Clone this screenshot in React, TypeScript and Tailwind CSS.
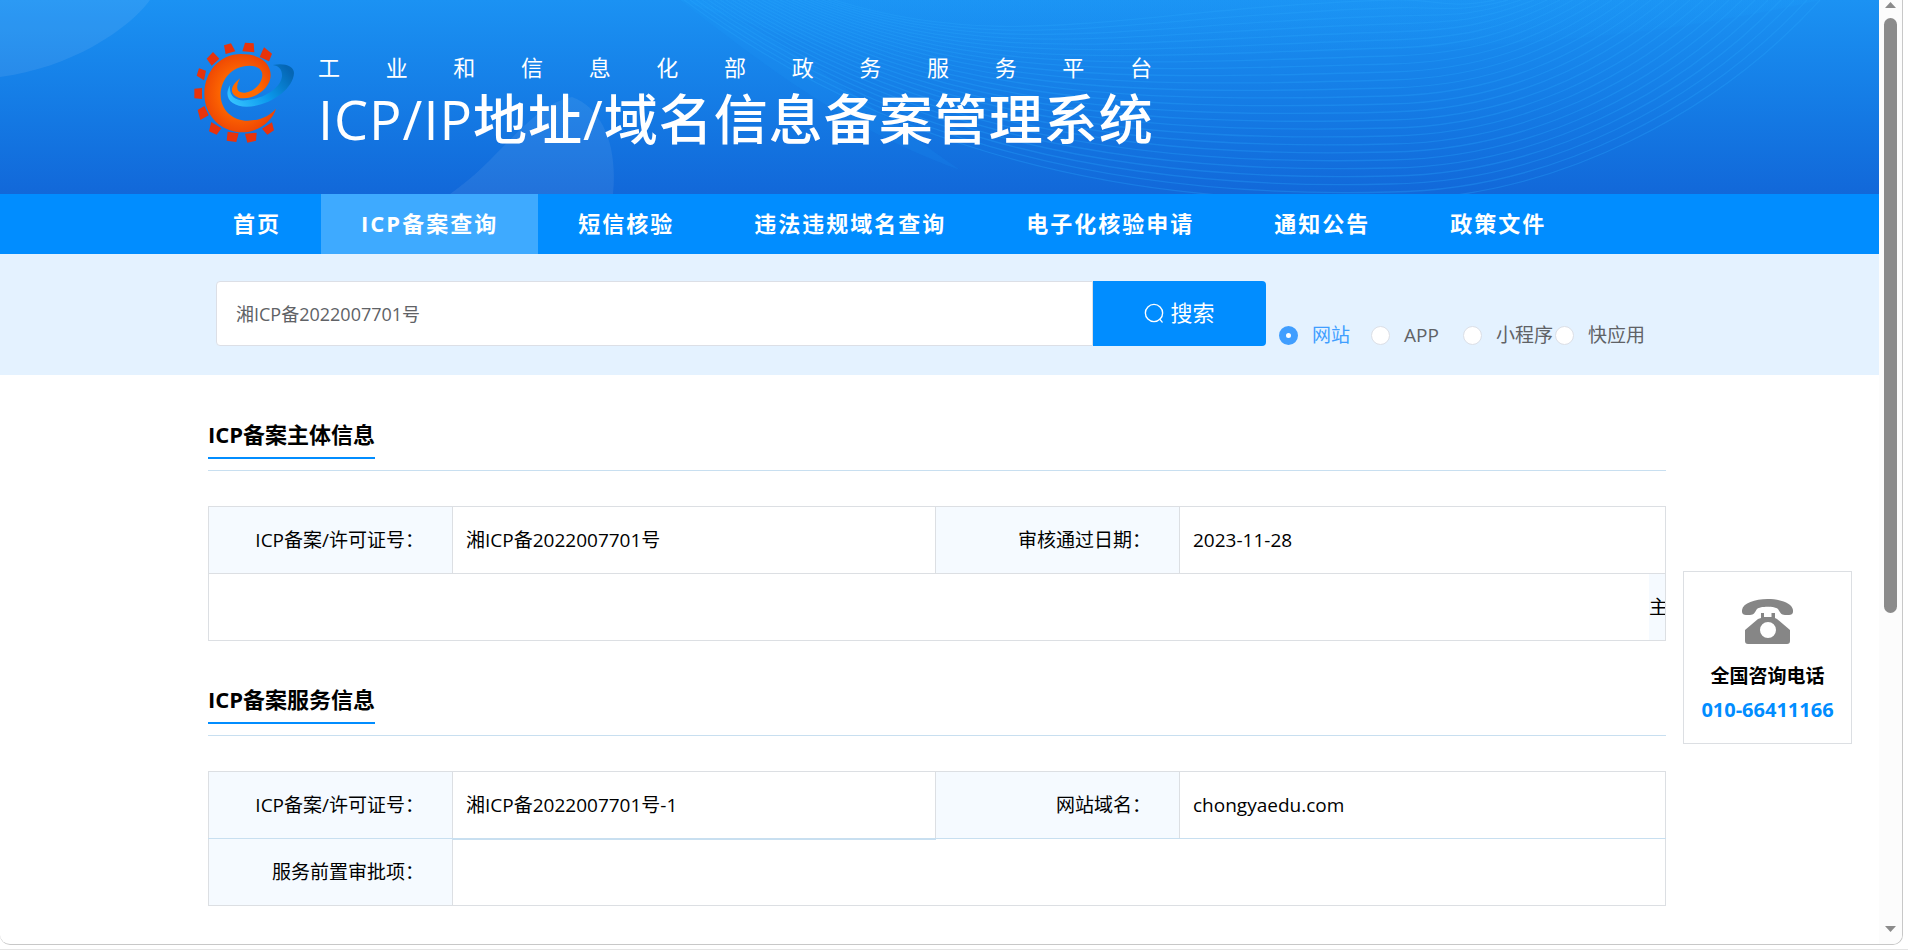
import { useState } from "react";

const navItems = ["首页", "ICP备案查询", "短信核验", "违法违规域名查询", "电子化核验申请", "通知公告", "政策文件"];
const kinds = ["网站", "APP", "小程序", "快应用"];
const waves = Array.from({ length: 26 }, (_, i) => i);

function Backdrop() {
  return (
    <svg
      className="absolute inset-0 h-full w-full"
      viewBox="0 0 1879 194"
      preserveAspectRatio="none"
      fill="none"
      aria-hidden="true"
    >
      <defs>
        <linearGradient id="sheet" x1="0" y1="0" x2="0" y2="1">
          <stop offset="0" stopColor="#1c9dfa" stopOpacity="0.7" />
          <stop offset="0.9" stopColor="#1c9dfa" stopOpacity="0" />
        </linearGradient>
      </defs>
      <path d="M0 0H150C128 30 70 68 0 77Z" fill="#fff" fillOpacity="0.08" />
      <path d="M450 194C500 160 530 105 572 97C602 108 618 145 613 194Z" fill="#fff" fillOpacity="0.07" />
      <path d="M680 0C850 60 960 80 1120 62C1320 45 1560 60 1820 0Z" fill="url(#sheet)" fillOpacity="0.35" />
      <path d="M680 0C770 70 850 130 960 170C860 100 800 50 700 0Z" fill="#1ea2fb" fillOpacity="0.12" />
      {waves.map((i) => (
        <path
          key={i}
          d={`M${684 + i * 6} 0C${860 + i * 6} ${130 - i * 3} ${1080 + i * 2} ${208 - i * 8} 1390 ${200 - i * 8}C${1560 - i * 5} ${198 - i * 8} ${1720 - i * 11} ${110 - i * 4} ${1820 - i * 13} 0`}
          stroke="#27a5fb"
          strokeOpacity="0.32"
          strokeWidth="1.3"
        />
      ))}
    </svg>
  );
}

function Logo() {
  return (
    <svg className="h-[101px] w-[100px] shrink-0" viewBox="27 22 300 303" aria-label="工业和信息化部" role="img">
      <defs>
        <radialGradient id="flame" cx="0.5" cy="0.5" r="0.6">
          <stop offset="0.4" stopColor="#ff6a00" />
          <stop offset="1" stopColor="#e93c05" />
        </radialGradient>
        <linearGradient id="ring" x1="0" y1="0.8" x2="1" y2="0.3">
          <stop offset="0" stopColor="#35c3ff" />
          <stop offset="0.5" stopColor="#0a98ec" />
          <stop offset="1" stopColor="#0566b4" />
        </linearGradient>
      </defs>
      <g fill="#e8330b">
        <path d="M117 32 138 26 151 50 122 58Z" />
        <path d="M180 24 206 26 208 53 172 50Z" />
        <path d="M237 38 261 57 252 80 224 67Z" />
        <path d="M84 52 103 72 80 93 65 72Z" />
        <path d="M42 101 63 108 57 137 35 123Z" />
        <path d="M28 162 51 160 51 193 28 191Z" />
        <path d="M38 226 58 214 71 242 46 256Z" />
        <path d="M79 262 109 281 95 300 72 290Z" />
        <path d="M128 291 161 296 154 322 125 318Z" />
        <path d="M180 297 215 294 213 318 187 324Z" />
        <path d="M231 282 261 263 267 287 247 300Z" />
      </g>
      <path
        fill="url(#ring)"
        d="M263 91C295 84 327 92 327 115C325 165 250 216 185 216C140 216 112 188 136 150C130 182 150 200 182 197C240 192 287 160 291 125C292 105 282 93 263 91Z"
      />
      <path
        fill="url(#flame)"
        d="M273 222C262 262 215 293 172 293C108 293 58 242 58 178C58 110 105 58 168 58C225 58 257 85 257 122C257 160 212 192 175 191C148 190 134 172 144 154C149 145 158 138 165 131C150 158 155 176 180 174C208 171 232 145 232 120C232 103 215 93 193 93C140 93 107 135 107 180C107 228 145 258 188 258C225 258 255 243 273 222Z"
      />
    </svg>
  );
}

function Header() {
  return (
    <header className="relative h-[194px] bg-linear-to-b from-[#1b92f3] to-[#1268d9] pl-[194px]">
      <Backdrop />
      <div className="relative flex pt-[42px] text-white">
        <Logo />
        <div className="ml-6 w-[834px]">
          <p className="h-[50px] pt-2 text-[22px] leading-[34px] [text-align-last:justify]">
            工 业 和 信 息 化 部 政 务 服 务 平 台
          </p>
          <h1 className="text-[54px] leading-[54px] font-medium tracking-[1px] whitespace-nowrap">
            ICP/IP地址/域名信息备案管理系统
          </h1>
        </div>
      </div>
    </header>
  );
}

function SearchBar() {
  const [kind, setKind] = useState("网站");
  const [query, setQuery] = useState("湘ICP备2022007701号");
  return (
    <form
      className="flex bg-[#e4f2ff] pt-[27px] pb-[29px] pl-[216px] text-[#606266]"
      onSubmit={(e) => e.preventDefault()}
    >
      <input
        type="text"
        aria-label="备案查询"
        value={query}
        onChange={(e) => setQuery(e.target.value)}
        className="h-[65px] w-[877px] rounded-l border border-[#dcdfe6] bg-white px-[19px] pb-0.5 text-lg outline-none"
      />
      <button
        type="submit"
        className="flex w-[173px] items-center justify-center gap-1.5 rounded-r bg-[#018dff] pb-0.5 text-[22px] text-white"
      >
        <svg className="size-5" viewBox="0 0 22 22" fill="none" stroke="currentColor" strokeWidth="1.5" aria-hidden="true">
          <circle cx="11" cy="11" r="9.500" />
          <path d="M17.500 18L20 21" strokeLinecap="round" />
        </svg>
        搜索
      </button>
      <fieldset className="ml-[13px] flex items-end">
        {kinds.map((k) => (
          <label
            key={k}
            className="flex h-[22px] w-[92px] items-center gap-[14px] text-[19px] whitespace-nowrap has-checked:text-[#409eff]"
          >
            <input
              type="radio"
              name="kind"
              checked={kind === k}
              onChange={() => setKind(k)}
              className="size-[19px] shrink-0 appearance-none rounded-full border border-[#dcdfe6] bg-white checked:border-[7px] checked:border-[#409eff]"
            />
            {k}
          </label>
        ))}
      </fieldset>
    </form>
  );
}

function SectionTitle({ children }: { children: string }) {
  return (
    <div className="border-b border-[#c8dff0] pb-[11px]">
      <h2 className="inline-block border-b-2 border-[#018dff] pb-[7px] align-top text-[22px] leading-8 font-bold">
        {children}
      </h2>
    </div>
  );
}

const tableCls =
  "mt-[35px] w-full table-fixed border-collapse text-[19px] [&_td]:border [&_td]:border-[#dcdfe3] [&_th]:border [&_th]:border-[#dcdfe3]";
const labelCls = "h-[67px] bg-[#f5faff] pr-7 text-right font-normal";
const valueCls = "px-[13px]";

function Columns() {
  return (
    <colgroup>
      <col className="w-[244px]" />
      <col className="w-[483px]" />
      <col className="w-[244px]" />
      <col />
    </colgroup>
  );
}

function PhoneCard() {
  return (
    <aside className="mt-[196px] mr-[27px] ml-[17px] flex w-[169px] shrink-0 flex-col items-center self-start border border-[#dcdfe3] pt-[27px] pb-[18px] font-bold">
      <svg className="h-[45px] w-[51px]" viewBox="0 0 51 45" fill="#868686" aria-hidden="true">
        <path d="M0 11C1 4 13 0 25.500 0S50 4 51 11V13C51 15 49 16 47 16H43C39 16 38 13 36 10C33 7 18 7 15 10C13 13 12 16 8 16H4C2 16 0 15 0 13Z" />
        <path
          fillRule="evenodd"
          d="M19 14H22V18H29.500V14H33V19L35 20L48 31V42C48 44 47 45 45 45H6C4 45 3 44 3 42V31L16 20L19 19ZM26 23A8 8 0 1 0 26 39A8 8 0 1 0 26 23Z"
        />
      </svg>
      <p className="mt-[15px] text-[19px] leading-[35px]">全国咨询电话</p>
      <a href="tel:010-66411166" className="text-xl leading-[31px] text-[#018dff]">
        010-66411166
      </a>
    </aside>
  );
}

function Scrollbar() {
  return (
    <div className="flex w-[23px] shrink-0 flex-col items-center bg-[#fcfcfc] pt-0.5 pb-3" aria-hidden="true">
      <svg className="h-[6px] w-[11px]" viewBox="0 0 11 6" fill="#8b8b8b">
        <path d="M5.500 0 11 6H0Z" />
      </svg>
      <div className="mt-2.5 h-[64%] w-[13px] rounded-full bg-[#8b8b8b]" />
      <svg className="mt-auto h-[6px] w-[11px]" viewBox="0 0 11 6" fill="#8b8b8b">
        <path d="M0 0H11L5.500 6Z" />
      </svg>
    </div>
  );
}

export default function App() {
  return (
    <div className="h-screen overflow-hidden border-b border-[#e4e4e4] bg-white pr-[5px] pb-[4px] font-['Open_Sans','Noto_Sans_CJK_SC',sans-serif] text-black">
      <div className="flex h-full overflow-hidden rounded-b-[10px] border-r border-b border-[#c8c8c8]">
        <div className="min-w-0 flex-1 overflow-hidden">
          <Header />
          <nav className="flex h-[60px] bg-[#018dff] pl-[193px] text-[22px] font-bold tracking-[2px] text-white">
            {navItems.map((n, i) => (
              <a
                key={n}
                href="#"
                aria-current={i === 1 ? "page" : undefined}
                className="flex items-center px-10 pb-0.5 whitespace-nowrap aria-[current=page]:bg-[#3eaaff]"
              >
                {n}
              </a>
            ))}
          </nav>
          <SearchBar />
          <div className="flex pl-[208px]">
            <main className="min-w-0 flex-1 pt-[43px]">
              <SectionTitle>ICP备案主体信息</SectionTitle>
              <table className={tableCls}>
                <Columns />
                <tbody>
                  <tr>
                    <th scope="row" className={labelCls}>ICP备案/许可证号：</th>
                    <td className={valueCls}>湘ICP备2022007701号</td>
                    <th scope="row" className={labelCls}>审核通过日期：</th>
                    <td className={valueCls}>2023-11-28</td>
                  </tr>
                  <tr>
                    <td colSpan={4} className="h-[67px] border-t-[#c8dff0]!">
                      <div className="ml-auto flex h-[66px] w-4 items-center overflow-hidden bg-[#f5faff]">主</div>
                    </td>
                  </tr>
                </tbody>
              </table>
              <div className="h-[42px]" />
              <SectionTitle>ICP备案服务信息</SectionTitle>
              <table className={tableCls}>
                <Columns />
                <tbody>
                  <tr>
                    <th scope="row" className={`${labelCls} border-b-[#c8dff0]!`}>ICP备案/许可证号：</th>
                    <td className={`${valueCls} border-b-2! border-b-[#c8dff0]!`}>湘ICP备2022007701号-1</td>
                    <th scope="row" className={`${labelCls} border-b-[#c8dff0]!`}>网站域名：</th>
                    <td className={`${valueCls} border-b-[#c8dff0]!`}>chongyaedu.com</td>
                  </tr>
                  <tr>
                    <th scope="row" className={labelCls}>服务前置审批项：</th>
                    <td colSpan={3} className={valueCls} />
                  </tr>
                </tbody>
              </table>
            </main>
            <PhoneCard />
          </div>
        </div>
        <Scrollbar />
      </div>
    </div>
  );
}
